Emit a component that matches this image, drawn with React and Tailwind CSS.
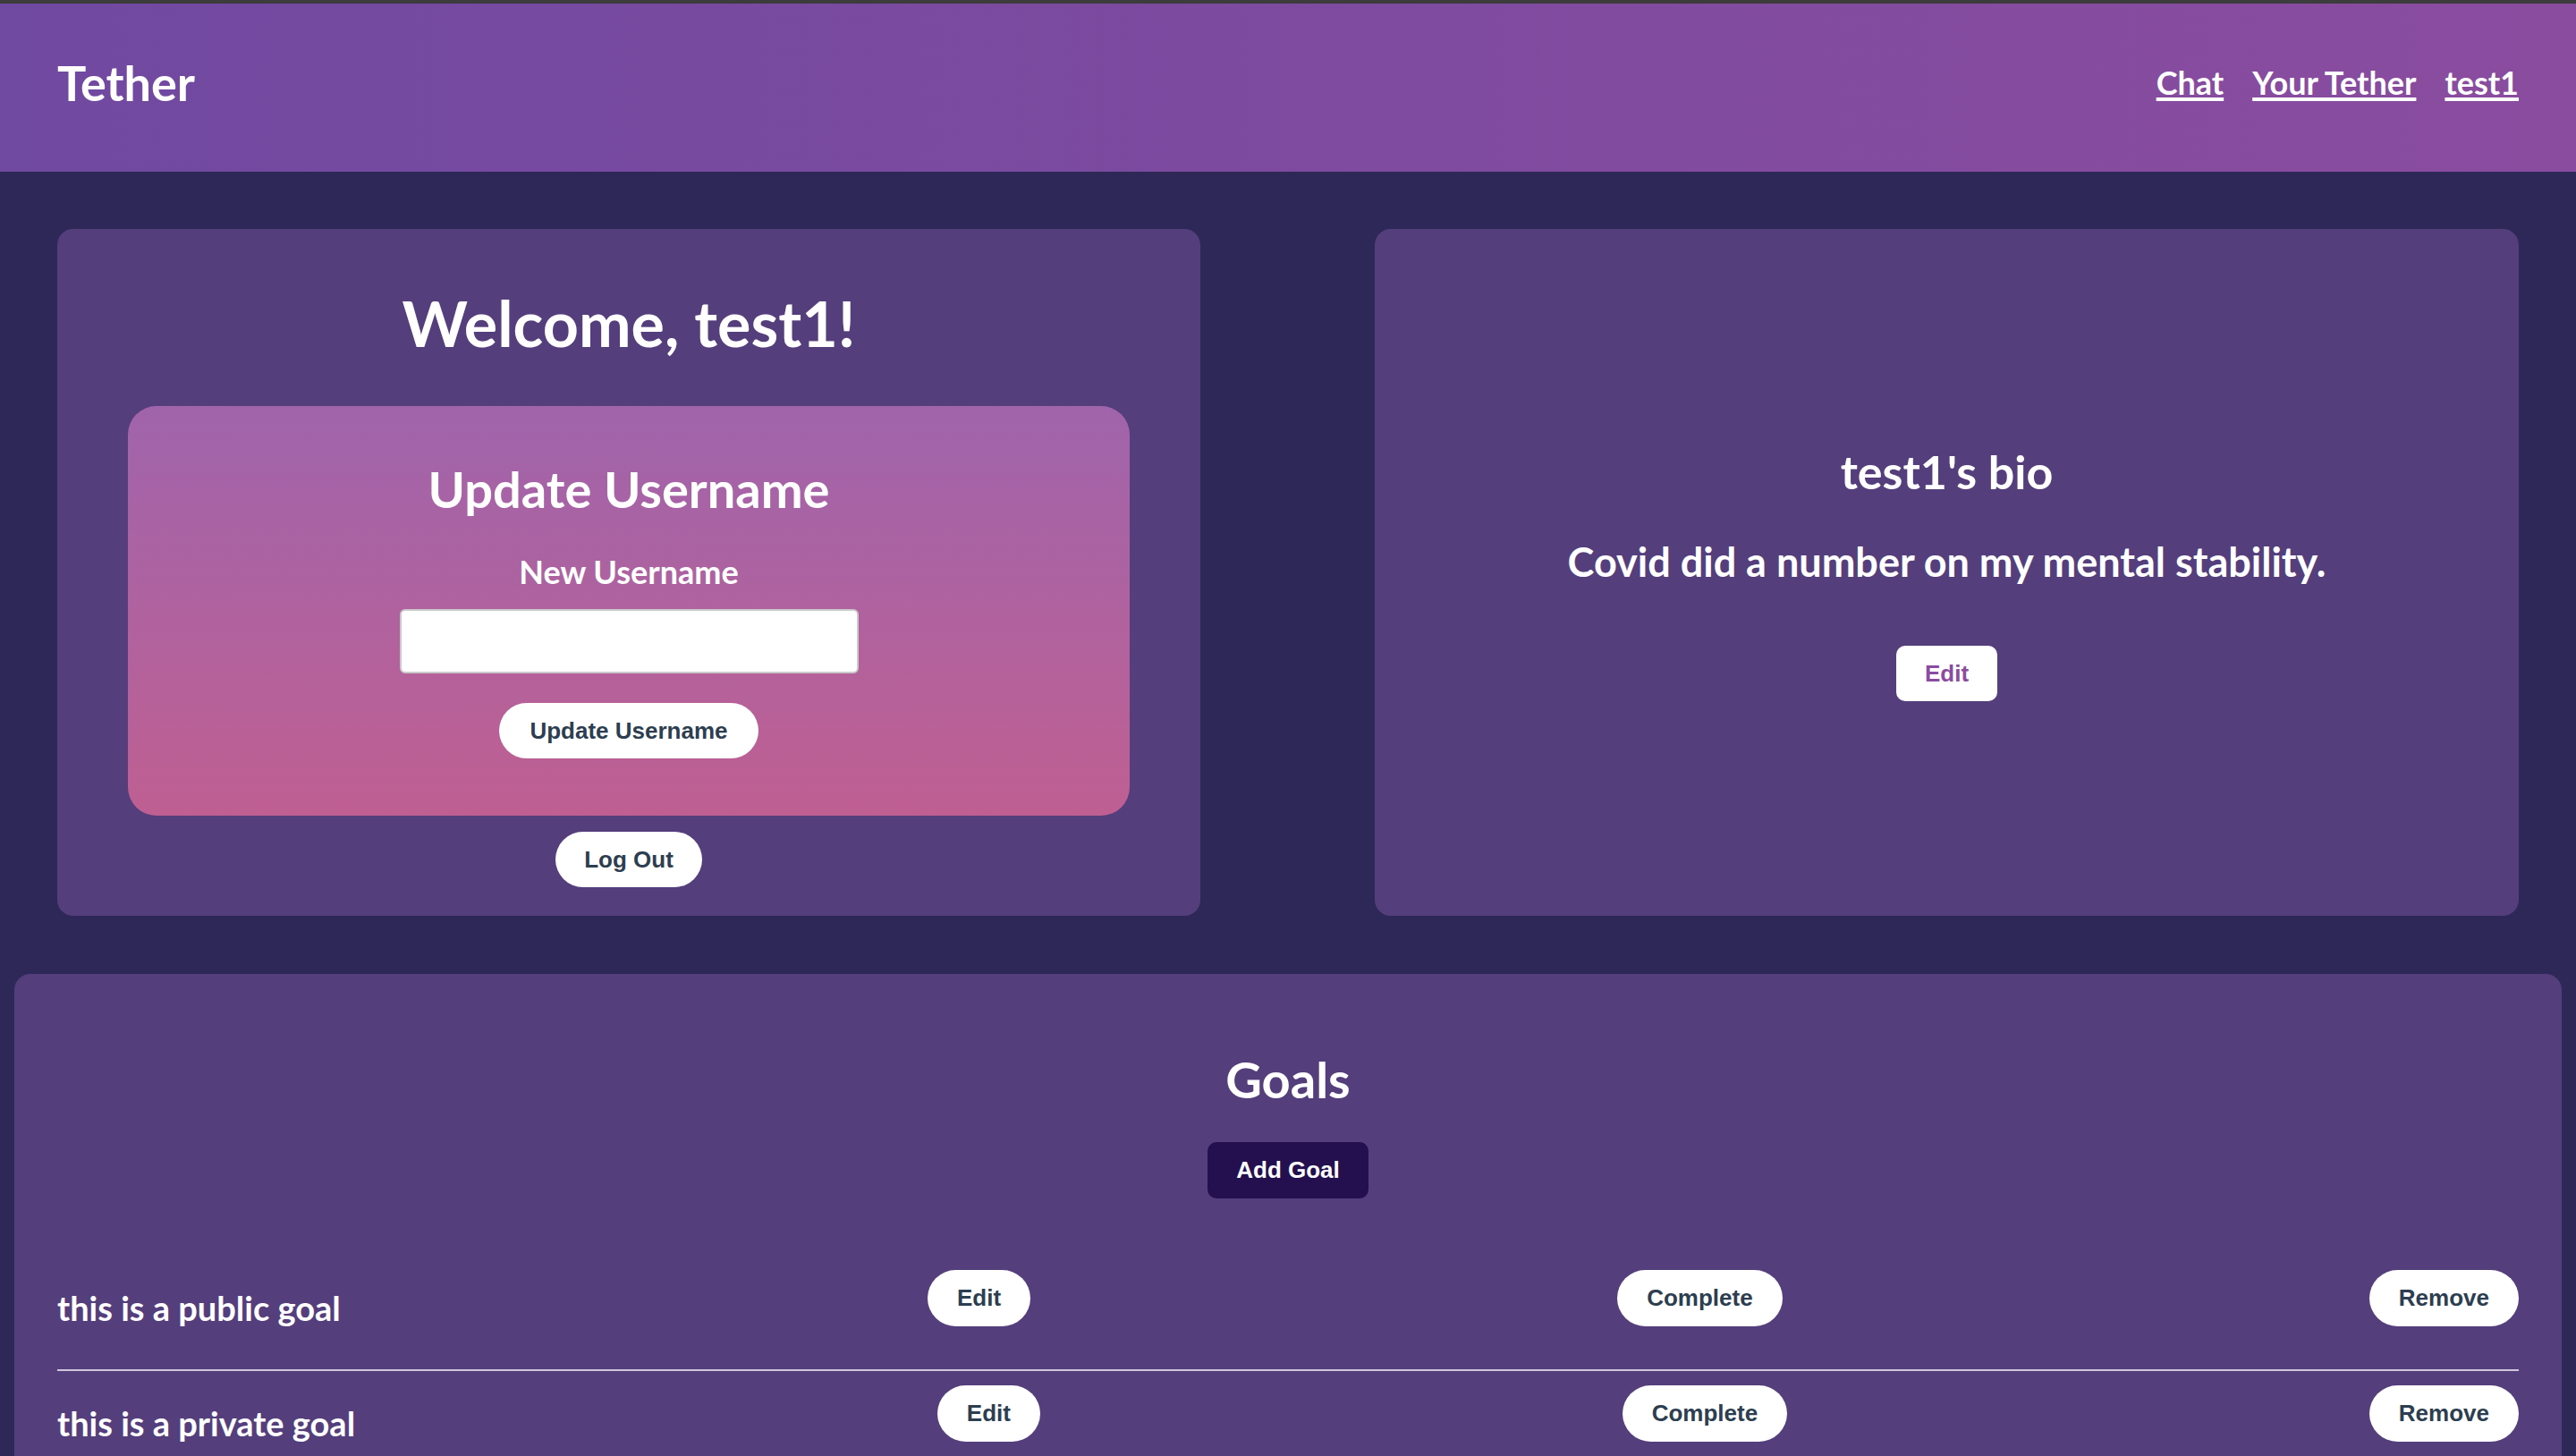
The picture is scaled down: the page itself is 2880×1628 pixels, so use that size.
import React from "react";

const pill =
  "inline-flex items-center justify-center h-[63px] px-[33px] rounded-full bg-white text-[#2c3e50] text-[26px] font-bold font-['Liberation_Sans',Arial,sans-serif]";

const GoalRow = ({ text, first }) => {
  return (
    <div
      className={`flex justify-between items-start pb-[45px] border-b-2 border-[#cfc6dc] ${
        first ? "pt-0" : "pt-[16px]"
      }`}
    >
      <p className="mt-[20px] text-[38px] leading-[1.2] font-bold text-white">
        {text}
      </p>
      <button type="button" className={pill}>
        Edit
      </button>
      <button type="button" className={pill}>
        Complete
      </button>
      <button type="button" className={pill}>
        Remove
      </button>
    </div>
  );
};

const Header = () => {
  return (
    <div className="h-[188px] px-[64px] pb-[10px] flex items-center justify-between bg-linear-to-r from-[#7049a0] to-[#8a4c9f] text-white">
      <span className="text-[54px] leading-[1.2] font-bold">Tether</span>
      <nav className="flex items-center gap-[32px] text-[36px] leading-[1.2] font-bold">
        <a className="underline decoration-[4px] underline-offset-[3px]">Chat</a>
        <a className="underline decoration-[4px] underline-offset-[3px]">
          Your Tether
        </a>
        <a className="underline decoration-[4px] underline-offset-[3px]">test1</a>
      </nav>
    </div>
  );
};

export default function App() {
  return (
    <div className="min-h-screen bg-[#2e2859] font-['Lato','Noto_Sans',sans-serif] text-white">
      <div className="h-[4px] bg-[#3c3c3c]" />
      <Header />

      <div className="px-[64px] pt-[64px] flex justify-between">
        {/* account card */}
        <div className="w-[1278px] h-[768px] rounded-[18px] bg-[#553e7c] flex flex-col items-center pt-[63px]">
          <h1 className="text-[70px] leading-[1.2] font-bold">Welcome, test1!</h1>
          <div className="mt-[51px] w-[1120px] rounded-[32px] bg-linear-to-b from-[#a064ab] to-[#bf5f92] flex flex-col items-center pt-[59px] pb-[64px]">
            <h2 className="text-[56px] leading-[1.2] font-bold">Update Username</h2>
            <label className="mt-[38px] text-[36px] leading-[1.2] font-bold">
              New Username
            </label>
            <input
              type="text"
              className="mt-[20px] w-[513px] h-[72px] bg-white rounded-[6px] border-2 border-[#c9c9c9] text-black"
            />
            <button type="button" className={`${pill} mt-[33px] !h-[62px] px-[34px]`}>
              Update Username
            </button>
          </div>
          <button type="button" className={`${pill} mt-[18px] !h-[62px] !px-[32px]`}>
            Log Out
          </button>
        </div>

        {/* bio card */}
        <div className="w-[1279px] h-[768px] rounded-[18px] bg-[#553e7c] flex flex-col items-center justify-center">
          <h2 className="text-[52px] leading-[1.2] font-bold">test1's bio</h2>
          <p className="mt-[43px] text-[45px] leading-[1.2] font-bold">
            Covid did a number on my mental stability.
          </p>
          <button
            type="button"
            className="mt-[67px] w-[113px] h-[62px] rounded-[10px] bg-white text-[#8a4ba0] text-[26px] font-bold font-['Liberation_Sans',Arial,sans-serif]"
          >
            Edit
          </button>
        </div>
      </div>

      {/* goals */}
      <div className="mx-[16px] mt-[65px] rounded-[18px] bg-[#553e7c] px-[48px] pt-[84px] pb-[40px]">
        <div className="flex flex-col items-center">
          <h2 className="text-[56px] leading-[1.2] font-bold">Goals</h2>
          <button
            type="button"
            className="mt-[37px] h-[63px] px-[32px] rounded-[10px] bg-[#24104f] text-white text-[26px] font-bold font-['Liberation_Sans',Arial,sans-serif]"
          >
            Add Goal
          </button>
        </div>
        <div className="mt-[80px]">
          <GoalRow text="this is a public goal" first />
          <GoalRow text="this is a private goal" />
        </div>
      </div>
    </div>
  );
}
